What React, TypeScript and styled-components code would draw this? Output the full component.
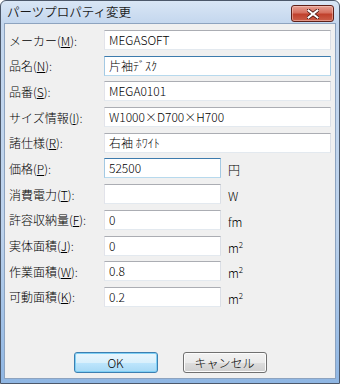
import React from 'react';
import styled, { createGlobalStyle } from 'styled-components';

const GlobalStyle = createGlobalStyle`
  html, body {
    margin: 0;
    padding: 0;
    background: #ffffff;
  }
  body {
    font-family: "Noto Sans CJK JP", "Liberation Sans", sans-serif;
    font-size: 12px;
    font-weight: 300;
    color: #000000;
  }
`;

const UI_FONT = `"Noto Sans CJK JP", "Liberation Sans", sans-serif`;

const Window = styled.div`
  width: 340px;
  height: 384px;
  box-sizing: border-box;
  display: flex;
  flex-direction: column;
  border: 1px solid #4c586a;
  border-radius: 6px 6px 0 0;
  background: linear-gradient(to bottom, #d9e6f5 0px, #c4d7ee 22px, #bcd2ec 60%, #8fb6e3 100%);
  overflow: hidden;
`;

const TitleBar = styled.div`
  height: 22px;
  display: flex;
  align-items: flex-start;
  padding: 0 5px 0 6px;
`;

const Title = styled.div`
  font-family: ${UI_FONT};
  font-size: 12.5px;
  font-weight: 350;
  line-height: 22px;
  color: #1a1a1a;
`;

const CloseButton = styled.div`
  margin-left: auto;
  margin-top: 4px;
  width: 43px;
  height: 17px;
  box-sizing: border-box;
  border: 1px solid #5e1f17;
  border-radius: 3px;
  background: linear-gradient(to bottom, #e6a093 0%, #d6705f 45%, #c0402c 55%, #cc5f49 100%);
  box-shadow: inset 0 0 0 1px rgba(255, 220, 210, 0.45);
  display: flex;
  align-items: center;
  justify-content: center;
`;

const Client = styled.div`
  flex: 1;
  margin: 0 3px 4px 3px;
  border: 1px solid #8da3bf;
  background: #f0f0f0;
  display: flex;
  flex-direction: column;
  padding: 6px 4px 0 4px;
`;

const Form = styled.div`
  display: flex;
  flex-direction: column;
  gap: 5.7px;
`;

const Row = styled.div`
  display: flex;
  align-items: center;
  height: 20px;
`;

const Label = styled.div`
  width: 95px;
  flex: none;
  font-family: ${UI_FONT};
  font-size: 12px;
  white-space: nowrap;
`;

const Key = styled.span`
  text-decoration: underline;
  text-underline-offset: 1px;
`;

const Field = styled.div<{ $width: number; $active?: boolean }>`
  width: ${(p) => p.$width}px;
  height: 20px;
  box-sizing: border-box;
  flex: none;
  background: #ffffff;
  border: 1px solid;
  border-color: ${(p) =>
    p.$active ? '#3d7bad #a4c9e3 #b7d9ed #a4c9e3' : '#abadb3 #dbdfe6 #e3e9ef #e2e3ea'};
  padding: 0 4px;
  font-family: ${UI_FONT};
  font-size: 12px;
  line-height: 17px;
  white-space: nowrap;
  overflow: hidden;
`;

const Unit = styled.div`
  margin-left: 7px;
  padding-top: 3px;
  font-family: ${UI_FONT};
  font-size: 12px;
`;

const Sup = styled.sup`
  font-size: 8px;
`;

const ButtonRow = styled.div`
  margin-top: auto;
  margin-bottom: 5px;
  display: flex;
  justify-content: center;
  gap: 25px;
`;

const Button = styled.div<{ $default?: boolean }>`
  width: 84px;
  height: 21px;
  box-sizing: border-box;
  border: 1px solid ${(p) => (p.$default ? '#3c7fb1' : '#707070')};
  border-radius: 3px;
  background: ${(p) =>
    p.$default
      ? 'linear-gradient(to bottom, #eaf6fd 0%, #d9f0fc 50%, #bee6fd 51%, #a7d9f5 100%)'
      : 'linear-gradient(to bottom, #f2f2f2 0%, #ebebeb 50%, #dddddd 51%, #cfcfcf 100%)'};
  box-shadow: inset 0 0 0 1px ${(p) => (p.$default ? '#7fd0f5' : '#fcfcfc')};
  display: flex;
  align-items: center;
  justify-content: center;
  font-family: ${UI_FONT};
  font-size: 12px;
`;

type FieldRow = {
  label: string;
  key: string;
  value: string;
  width: number;
  active?: boolean;
  unit?: React.ReactNode;
};

const squareMetre = (
  <>
    m<Sup>2</Sup>
  </>
);

const rows: FieldRow[] = [
  { label: 'メーカー', key: 'M', value: 'MEGASOFT', width: 227 },
  { label: '品名', key: 'N', value: '片袖ﾃﾞｽｸ', width: 227, active: true },
  { label: '品番', key: 'S', value: 'MEGA0101', width: 227 },
  { label: 'サイズ情報', key: 'I', value: 'W1000×D700×H700', width: 227 },
  { label: '諸仕様', key: 'R', value: '右袖 ﾎﾜｲﾄ', width: 227 },
  { label: '価格', key: 'P', value: '52500', width: 117, active: true, unit: '円' },
  { label: '消費電力', key: 'T', value: '', width: 117, unit: 'W' },
  { label: '許容収納量', key: 'F', value: '0', width: 117, unit: 'fm' },
  { label: '実体面積', key: 'J', value: '0', width: 117, unit: squareMetre },
  { label: '作業面積', key: 'W', value: '0.8', width: 117, unit: squareMetre },
  { label: '可動面積', key: 'K', value: '0.2', width: 117, unit: squareMetre },
];

function CloseGlyph() {
  return (
    <svg width="12" height="10" viewBox="0 0 12 10">
      <path
        d="M1 1 L11 9 M11 1 L1 9"
        stroke="#4a1410"
        strokeWidth="3.6"
        strokeLinecap="square"
      />
      <path
        d="M1.5 1.5 L10.5 8.5 M10.5 1.5 L1.5 8.5"
        stroke="#ffffff"
        strokeWidth="2"
        strokeLinecap="square"
      />
    </svg>
  );
}

export default function App() {
  return (
    <>
      <GlobalStyle />
      <Window>
        <TitleBar>
          <Title>パーツプロパティ変更</Title>
          <CloseButton>
            <CloseGlyph />
          </CloseButton>
        </TitleBar>
        <Client>
          <Form>
            {rows.map((r) => (
              <Row key={r.key}>
                <Label>
                  {r.label}(<Key>{r.key}</Key>):
                </Label>
                <Field $width={r.width} $active={r.active}>
                  {r.value}
                </Field>
                {r.unit && <Unit>{r.unit}</Unit>}
              </Row>
            ))}
          </Form>
          <ButtonRow>
            <Button $default>OK</Button>
            <Button>キャンセル</Button>
          </ButtonRow>
        </Client>
      </Window>
    </>
  );
}
